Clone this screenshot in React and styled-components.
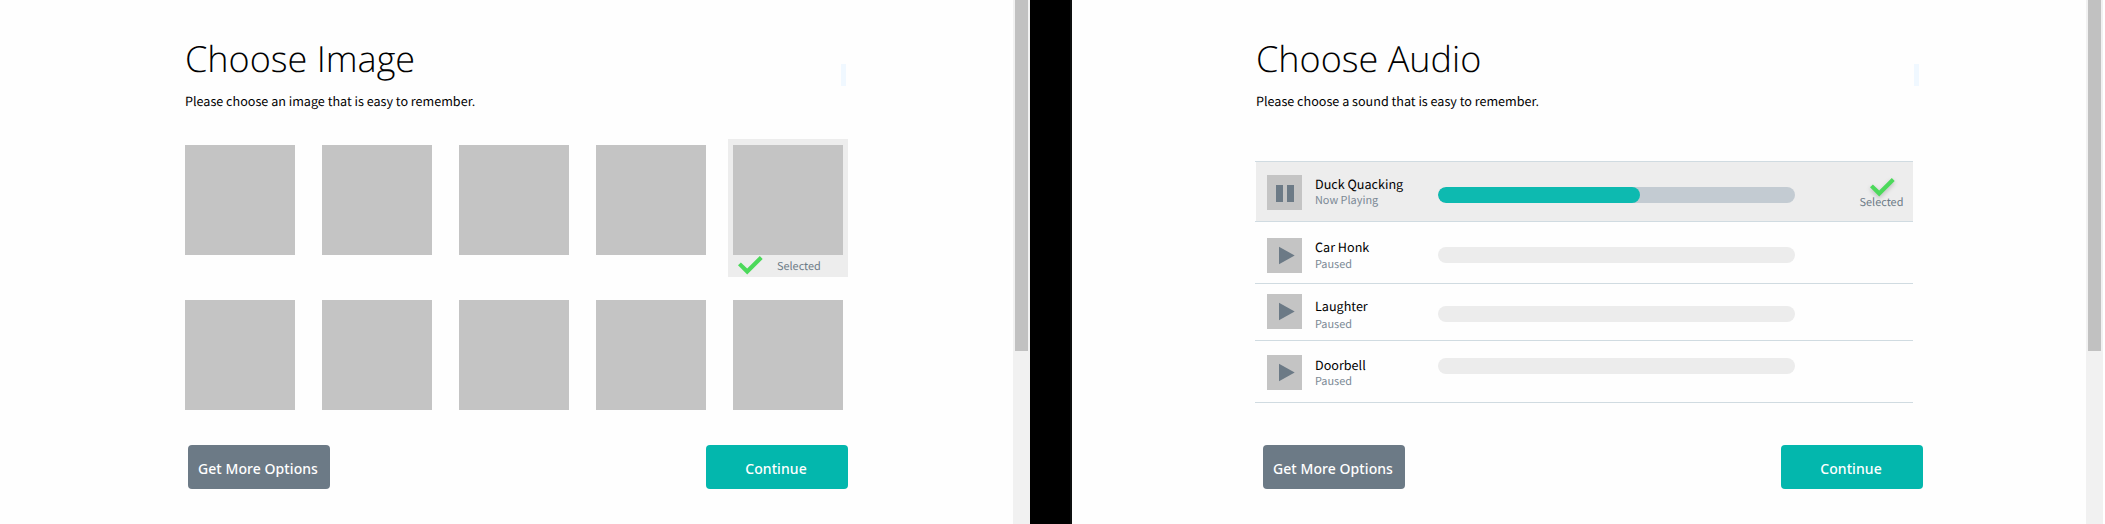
import React from 'react';
import styled, { createGlobalStyle } from 'styled-components';

const GlobalStyle = createGlobalStyle`
  * { box-sizing: border-box; }
  body { margin: 0; background: #fff; text-rendering: geometricPrecision; }
`;

const bodyFont = '"Noto Sans CJK JP", "Noto Sans", sans-serif';

const Page = styled.div`
  display: flex;
  width: 2105px;
  height: 524px;
  overflow: hidden;
  background: #fff;
`;

const Pane = styled.section`
  display: flex;
  justify-content: space-between;
  width: ${(p) => p.$width}px;
  height: 100%;
  background: #fefefe;
`;

const Content = styled.main`
  display: flex;
  flex-direction: column;
  width: ${(p) => p.$width}px;
  margin-left: ${(p) => p.$inset}px;
`;

const Divider = styled.div`
  width: 42px;
  height: 100%;
  background: #000;
  border-right: 2px solid #0d0f0f;
`;

const Scrollbar = styled.div`
  width: 17px;
  height: 100%;
  padding: 0 2px;
  background: #f1f1f1;
`;

const ScrollThumb = styled.div`
  height: 351px;
  background: #c1c1c1;
`;

const Header = styled.header`
  display: flex;
  justify-content: space-between;
  height: 139px;
`;

const Heading = styled.div`
  padding: 34px 0 0 ${(p) => p.$indent || 0}px;
`;

const Title = styled.h1`
  margin: 0;
  height: 50px;
  font: 300 36px/50px "Open Sans", sans-serif;
  color: #000;
  white-space: nowrap;
`;

const Subtitle = styled.p`
  margin: 7px 0 0;
  font: 400 12.6px/20px ${bodyFont};
  color: #000;
  white-space: nowrap;
`;

const Marker = styled.div`
  width: 5px;
  height: 22px;
  margin: 64px ${(p) => p.$right}px 0 0;
  background: #f0f8ff;
`;

const ImageGrid = styled.div`
  display: grid;
  grid-template-columns: repeat(4, 137px) 120px;
  grid-template-rows: 155px 116px;
`;

const ImageTile = styled.div`
  height: ${(p) => (p.$selected ? 138 : 116)}px;
  width: ${(p) => (p.$selected ? 120 : 110)}px;
  margin-left: ${(p) => (p.$selected ? -5 : 0)}px;
  padding: 6px ${(p) => (p.$selected ? 5 : 0)}px 0;
  background: ${(p) => (p.$selected ? '#ededed' : 'transparent')};
`;

const Thumbnail = styled.div`
  width: 110px;
  height: 110px;
  background: #c4c4c4;
`;

const TileCaption = styled.div`
  display: flex;
  align-items: center;
  gap: 14px;
  height: 21px;
  padding-left: 5px;
`;

const Tag = styled.span`
  font: 400 10.9px/16px ${bodyFont};
  color: #6c7a86;
  white-space: nowrap;
`;

const Actions = styled.footer`
  display: flex;
  justify-content: space-between;
  width: ${(p) => p.$width}px;
  margin: ${(p) => p.$top}px 0 0 ${(p) => p.$left}px;
`;

const Button = styled.button`
  width: 142px;
  height: 44px;
  padding: 3px 2px 0 0;
  border: 0;
  border-radius: 4px;
  background: ${(p) => (p.$primary ? '#03b7ad' : '#6c7a86')};
  color: #fff;
  font: 500 14px/20px "Noto Sans", sans-serif;
  letter-spacing: 0.07px;
  white-space: nowrap;
`;

const TrackList = styled.div`
  margin-top: 22px;
  width: 658px;
  border-top: 1px solid #d0dbe1;
`;

const TrackRow = styled.div`
  display: grid;
  grid-template-columns: 48px 123px 357px 1fr;
  align-items: start;
  height: ${(p) => p.$height}px;
  padding-left: 12px;
  border-bottom: 1px solid #d0dbe1;
  background: ${(p) => (p.$active ? 'linear-gradient(90deg, transparent 1px, #ededed 1px)' : 'transparent')};
`;

const PlayButton = styled.div`
  width: 35px;
  height: 35px;
  margin-top: ${(p) => p.$top}px;
  background: #c4c4c4;
  svg { display: block; }
`;

const TrackText = styled.div`
  display: flex;
  flex-direction: column;
  gap: ${(p) => p.$gap}px;
  margin-top: ${(p) => p.$top}px;
`;

const TrackName = styled.span`
  font: 400 12.6px/16px ${bodyFont};
  height: 16px;
  color: #000;
  white-space: nowrap;
`;

const TrackStatus = styled.span`
  font: 400 10.9px/14px ${bodyFont};
  height: 14px;
  color: #7b8995;
`;

const ProgressTrack = styled.div`
  height: 16px;
  margin-top: ${(p) => p.$top}px;
  border-radius: 8px;
  overflow: hidden;
  background: ${(p) => (p.$active ? '#c3cbd2' : '#ececec')};
`;

const ProgressFill = styled.div`
  width: 202px;
  height: 16px;
  border-radius: 8px;
  background: #0dbab0;
`;

const SelectedMark = styled.div`
  display: flex;
  flex-direction: column;
  align-items: center;
  width: 43px;
  margin: 16px 0 0 65px;
  svg {
    margin: 0 0 -3px 1px;
    filter: drop-shadow(0 2px 2px rgba(0, 0, 0, 0.2));
  }
`;

const Check = () => (
  <svg width="25" height="19" viewBox="0 0 25 19">
    <path d="M0 9.3 2.9 6.4 9.2 12.5 21.8 0 24.7 2.9 9.2 18.4Z" fill="#4cd95b" />
  </svg>
);

const PlaybackIcon = ({ playing }) => (
  <svg width="35" height="35" viewBox="0 0 35 35" fill="#6c7a86">
    {playing ? <path d="M9 10h7v17H9zM20 10h7v17h-7z" /> : <path d="M12 8.7 27.7 17.5 12 26.3Z" />}
  </svg>
);

const tracks = [
  { name: 'Duck Quacking', status: 'Now Playing', active: true, height: 60, icon: 13, text: 14, gap: 1, bar: 25 },
  { name: 'Car Honk', status: 'Paused', height: 62, icon: 16, text: 17, gap: 2, bar: 25 },
  { name: 'Laughter', status: 'Paused', height: 57, icon: 10, text: 14, gap: 3, bar: 22 },
  { name: 'Doorbell', status: 'Paused', height: 62, icon: 14, text: 16, gap: 1, bar: 17 },
];

const images = Array.from({ length: 10 }, (_, i) => ({ id: i, selected: i === 4 }));

export default function App() {
  return (
    <Page>
      <GlobalStyle />
      <Pane $width={1030}>
        <Content $inset={185} $width={663}>
          <Header>
            <Heading>
              <Title>Choose Image</Title>
              <Subtitle>Please choose an image that is easy to remember.</Subtitle>
            </Heading>
            <Marker $right={2} />
          </Header>
          <ImageGrid>
            {images.map((image) => (
              <ImageTile key={image.id} $selected={image.selected}>
                <Thumbnail />
                {image.selected && (
                  <TileCaption>
                    <Check />
                    <Tag>Selected</Tag>
                  </TileCaption>
                )}
              </ImageTile>
            ))}
          </ImageGrid>
          <Actions $left={3} $top={35} $width={660}>
            <Button>Get More Options</Button>
            <Button $primary>Continue</Button>
          </Actions>
        </Content>
        <Scrollbar><ScrollThumb /></Scrollbar>
      </Pane>
      <Divider />
      <Pane $width={1031}>
        <Content $inset={183} $width={668}>
          <Header>
            <Heading $indent={1}>
              <Title>Choose Audio</Title>
              <Subtitle>Please choose a sound that is easy to remember.</Subtitle>
            </Heading>
            <Marker $right={4} />
          </Header>
          <TrackList>
            {tracks.map((track) => (
              <TrackRow key={track.name} $height={track.height} $active={track.active}>
                <PlayButton $top={track.icon}><PlaybackIcon playing={track.active} /></PlayButton>
                <TrackText $top={track.text} $gap={track.gap}>
                  <TrackName>{track.name}</TrackName>
                  <TrackStatus>{track.status}</TrackStatus>
                </TrackText>
                <ProgressTrack $top={track.bar} $active={track.active}>
                  {track.active && <ProgressFill />}
                </ProgressTrack>
                {track.active && (
                  <SelectedMark>
                    <Check />
                    <Tag>Selected</Tag>
                  </SelectedMark>
                )}
              </TrackRow>
            ))}
          </TrackList>
          <Actions $left={8} $top={42} $width={660}>
            <Button>Get More Options</Button>
            <Button $primary>Continue</Button>
          </Actions>
        </Content>
        <Scrollbar><ScrollThumb /></Scrollbar>
      </Pane>
    </Page>
  );
}
